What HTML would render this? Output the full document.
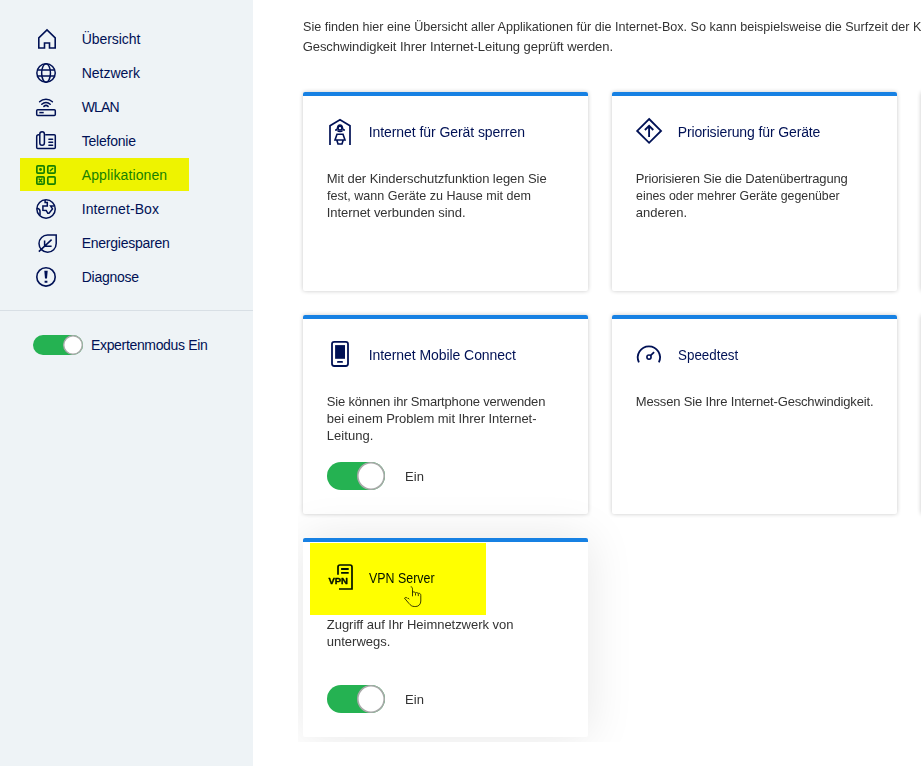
<!DOCTYPE html>
<html lang="de">
<head>
<meta charset="utf-8">
<title>Internet-Box – Applikationen</title>
<style>
html,body{margin:0;padding:0;}
body{width:921px;height:766px;overflow:hidden;position:relative;background:#fff;font-family:"Liberation Sans",Arial,sans-serif;color:#333;}
.t{position:absolute;white-space:pre;line-height:20px;margin:0;font-weight:400;}
#txt{position:absolute;left:0;top:0;width:921px;height:766px;overflow:hidden;will-change:transform;}
.abs{position:absolute;}
#side{position:absolute;left:0;top:0;width:253px;height:766px;background:#eef3f6;}
#sep{position:absolute;left:0;top:310px;width:253px;height:1px;background:#d8dfe5;}
.hl{position:absolute;background:#ffff00;}
.card{position:absolute;width:285px;height:199px;background:#fff;border-radius:2px;box-shadow:0 0 4px rgba(0,0,0,.22);}
.card:before{content:"";position:absolute;left:0;top:0;right:0;height:4px;background:#1781e3;border-radius:2px 2px 0 0;}
.card.hover{box-shadow:0 0 48px rgba(0,0,0,.10);}
#clip{position:absolute;left:298px;top:0;width:623px;height:742px;overflow:hidden;}
svg{position:absolute;overflow:visible;}
</style>
</head>
<body>

<div id="clip">
<div class="card" style="left:5px;top:92px"></div>
<div class="card" style="left:314px;top:92px"></div>
<div class="card" style="left:623px;top:92px"></div>
<div class="card" style="left:5px;top:315px"></div>
<div class="card" style="left:314px;top:315px"></div>
<div class="card" style="left:623px;top:315px"></div>
<div class="card hover" style="left:5px;top:538px"></div>
</div>
<div id="side"></div><div id="sep"></div>
<div class="hl" style="left:20px;top:158px;width:169px;height:33px;background:#eef300"></div>
<div class="hl" style="left:310px;top:543px;width:176px;height:72px;background:#ffff00"></div>
<div class="t" style="left:81.70px;top:29.15px;font-size:14px;color:#001155;letter-spacing:-0.05px;">Übersicht</div>
<div class="t" style="left:81.70px;top:63.15px;font-size:14px;color:#001155;">Netzwerk</div>
<div class="t" style="left:81.70px;top:97.15px;font-size:14px;color:#001155;letter-spacing:-0.833px;">WLAN</div>
<div class="t" style="left:81.70px;top:131.15px;font-size:14px;color:#001155;letter-spacing:-0.225px;">Telefonie</div>
<div class="t" style="left:81.70px;top:165.15px;font-size:14px;color:#178100;letter-spacing:0.117px;">Applikationen</div>
<div class="t" style="left:81.70px;top:199.15px;font-size:14px;color:#001155;letter-spacing:0.091px;">Internet-Box</div>
<div class="t" style="left:81.70px;top:233.15px;font-size:14px;color:#001155;letter-spacing:-0.25px;">Energiesparen</div>
<div class="t" style="left:81.70px;top:267.15px;font-size:14px;color:#001155;letter-spacing:-0.257px;">Diagnose</div>
<div class="t" style="left:91.00px;top:335.15px;font-size:14px;color:#001155;letter-spacing:-0.338px;">Expertenmodus Ein</div>
<div id="txt">
<div class="t" style="left:302.70px;top:16.50px;font-size:13px;color:#333333;transform:scaleX(0.9681);transform-origin:0.8px 50%;">Sie finden hier eine Übersicht aller Applikationen für die Internet-Box. So kann beispielsweise die Surfzeit der Kinder</div>
<div class="t" style="left:302.70px;top:36.50px;font-size:13px;color:#333333;letter-spacing:-0.062px;">Geschwindigkeit Ihrer Internet-Leitung geprüft werden.</div>
<h3 class="t" style="left:368.70px;top:122.15px;font-size:14px;color:#001155;letter-spacing:-0.068px;">Internet für Gerät sperren</h3>
<div class="t" style="left:326.80px;top:168.50px;font-size:13px;color:#333333;letter-spacing:-0.054px;">Mit der Kinderschutzfunktion legen Sie</div>
<div class="t" style="left:326.80px;top:185.50px;font-size:13px;color:#333333;transform:scaleX(0.9667);transform-origin:0.8px 50%;">fest, wann Geräte zu Hause mit dem</div>
<div class="t" style="left:326.80px;top:202.50px;font-size:13px;color:#333333;letter-spacing:-0.065px;">Internet verbunden sind.</div>
<h3 class="t" style="left:677.70px;top:122.15px;font-size:14px;color:#001155;letter-spacing:-0.122px;">Priorisierung für Geräte</h3>
<div class="t" style="left:635.80px;top:168.50px;font-size:13px;color:#333333;letter-spacing:-0.153px;">Priorisieren Sie die Datenübertragung</div>
<div class="t" style="left:635.80px;top:185.50px;font-size:13px;color:#333333;transform:scaleX(0.9488);transform-origin:0.8px 50%;">eines oder mehrer Geräte gegenüber</div>
<div class="t" style="left:635.80px;top:202.50px;font-size:13px;color:#333333;">anderen.</div>
<h3 class="t" style="left:368.70px;top:345.15px;font-size:14px;color:#001155;letter-spacing:-0.068px;">Internet Mobile Connect</h3>
<div class="t" style="left:326.80px;top:391.50px;font-size:13px;color:#333333;letter-spacing:-0.182px;">Sie können ihr Smartphone verwenden</div>
<div class="t" style="left:326.80px;top:408.50px;font-size:13px;color:#333333;letter-spacing:-0.056px;">bei einem Problem mit Ihrer Internet-</div>
<div class="t" style="left:326.80px;top:425.50px;font-size:13px;color:#333333;letter-spacing:0.043px;">Leitung.</div>
<div class="t" style="left:405.00px;top:466.50px;font-size:13px;color:#333333;letter-spacing:0.1px;">Ein</div>
<h3 class="t" style="left:677.70px;top:345.15px;font-size:14px;color:#001155;transform:scaleX(0.9548);transform-origin:0.8px 50%;">Speedtest</h3>
<div class="t" style="left:635.80px;top:391.50px;font-size:13px;color:#333333;letter-spacing:-0.163px;">Messen Sie Ihre Internet-Geschwindigkeit.</div>
<h3 class="t" style="left:368.70px;top:568.15px;font-size:14px;color:#001100;transform:scaleX(0.8851);transform-origin:0.8px 50%;">VPN Server</h3>
<div class="t" style="left:326.80px;top:614.50px;font-size:13px;color:#333333;letter-spacing:-0.032px;">Zugriff auf Ihr Heimnetzwerk von</div>
<div class="t" style="left:326.80px;top:631.50px;font-size:13px;color:#333333;">unterwegs.</div>
<div class="t" style="left:405.00px;top:689.50px;font-size:13px;color:#333333;letter-spacing:0.1px;">Ein</div>
</div>
<svg class="tg" width="50" height="20" viewBox="0 0 50 20" style="left:33px;top:335px"><rect width="50" height="20" rx="10.0" fill="#25b252"/><circle cx="40.0" cy="10.0" r="9.3" fill="#fff" stroke="#a9a9a9" stroke-width="1.4"/></svg>
<svg class="tg" width="58" height="28" viewBox="0 0 58 28" style="left:327px;top:462px"><rect width="58" height="28" rx="14.0" fill="#25b252"/><circle cx="44.0" cy="14.0" r="13.2" fill="#fff" stroke="#a9a9a9" stroke-width="1.6"/></svg>
<svg class="tg" width="58" height="28" viewBox="0 0 58 28" style="left:327px;top:685px"><rect width="58" height="28" rx="14.0" fill="#25b252"/><circle cx="44.0" cy="14.0" r="13.2" fill="#fff" stroke="#a9a9a9" stroke-width="1.6"/></svg>
<svg width="921" height="766" viewBox="0 0 921 766" style="left:0;top:0" fill="none" stroke="#001155" stroke-width="1.6" stroke-linejoin="miter" stroke-linecap="butt">
<!-- home -->
<path d="M44.5 48.8V43h5v5.8M44.5 48h-5.7V37.9L47 29.9l8.2 8V48h-5.7" />
<!-- globe -->
<g stroke-width="1.5"><circle cx="46.05" cy="73.05" r="9.2"/><ellipse cx="46.05" cy="73.05" rx="4.4" ry="9.2"/><path d="M37.200 69.950h17.700M37.200 76.100h17.700"/></g>
<!-- wlan -->
<g stroke-width="1.5"><rect x="36.7" y="109.7" width="18.6" height="5.8" rx="1"/><path d="M39.3 112.6h4.4" /><path d="M39.6 101.8a9 9 0 0 1 12.8 0M41.8 104.2a6 6 0 0 1 8.4 0M43.9 106.4a3 3 0 0 1 4.2 0" stroke-linecap="round"/></g>
<!-- phone -->
<g stroke-width="1.5"><path d="M45.2 134.8h9.1a1 1 0 0 1 1 1v11.6a1 1 0 0 1-1 1H37.7a1 1 0 0 1-1-1V136.8a2 2 0 0 1 2-2h.5"/><rect x="39.8" y="131.7" width="4.6" height="13.6" rx="2.3"/><path d="M48.900 139.300h3.700M48.900 142.300h3.700M48.900 145.300h3.700" stroke-linecap="round"/></g>
<!-- apps -->
<g stroke="#178100" stroke-width="1.700"><rect x="36.850" y="165.800" width="7.300" height="7.300" rx="0.900"/><rect x="47.800" y="165.800" width="7.300" height="7.300" rx="0.900"/><rect x="36.850" y="176.800" width="7.300" height="7.300" rx="0.900"/><rect x="47.800" y="176.800" width="7.300" height="7.300" rx="0.900"/><circle cx="40.500" cy="169.500" r="1.450" fill="#178100" stroke="none"/><path d="M50.300 170.700L52.700 168.400M39.100 179l2.800 2.900M41.900 179l-2.800 2.900" stroke-width="1.400" stroke-linecap="round"/></g>
<!-- internet-box -->
<g stroke-width="1.5"><circle cx="46.05" cy="209.05" r="9.2"/><path d="M45.1 200v2.600h2.200v3.300h-4.400v4.300l3.300.300l1.600 2.800h1.200l3.500-4.400l-1.900-3h3.500M36.900 208.200c1.500.200 3.100 1.200 3.100 2.800v4.300"/></g>
<!-- leaf -->
<g stroke-width="1.5"><path d="M56.2 235h-8.5a8.6 8.6 0 1 0 8.5 8.6z"/><path d="M38.8 251.6L51.6 239.6M44.6 240.4v5.9h7"/></g>
<!-- diagnose -->
<g><circle cx="46" cy="276.9" r="9.2"/><path d="M44.3 270.8h3.4l-.7 7.6h-2zM44.6 280.8h2.8v2h-2.8z" fill="#001155" stroke="none"/></g>

<!-- card1 house child -->
<g stroke-width="1.7"><path d="M330 144.900V125.700L340 119.800l10 5.900v19.200"/><circle cx="340" cy="128.200" r="1.900" stroke-width="1.500"/><path d="M335 130h1.300c1-.600 1.100-1.700 1.300-2.700c.300-1.700 1.100-2.400 2.400-2.400s2.100.700 2.400 2.400c.200 1 .300 2.100 1.300 2.700h1.300M337.400 130.400a3.400 3.400 0 0 0 5.200 0" stroke-width="1.500"/><path d="M337 134.200h6l2 5.800H335zM336.800 140l1.200 4h4l1.200-4" stroke-width="1.600"/></g>
<!-- card2 diamond -->
<g stroke-width="1.850"><path d="M649.100 119l11.900 11.900l-11.900 11.900l-11.900-11.900z"/><path d="M649.100 137V125.600M644.900 130l4.200-4.200l4.200 4.200"/></g>
<!-- card3 phone -->
<g stroke-width="1.800"><rect x="332" y="341.900" width="16" height="24.100" rx="2.200"/><rect x="335.100" y="345.100" width="9.900" height="13.700" fill="#001155" stroke="none"/><path d="M337.900 361.900h4.200" stroke-linecap="round"/></g>
<!-- card4 speed -->
<g stroke-width="1.800"><path d="M638.900 362.300a11.100 11.100 0 1 1 20 0"/><circle cx="649" cy="357.100" r="2.100" stroke-width="1.600"/><path d="M650.500 355.600l3.600-3.400"/></g>
<!-- card5 vpn -->
<g stroke="#001100" stroke-width="1.700"><path d="M338 574.750V567a2 2 0 0 1 2-2h10a2 2 0 0 1 2 2v22H339"/><path d="M341.100 569h7.600M341.100 572.900h7.600" stroke-width="1.800"/></g>
<text x="328.400" y="584.400" font-family="Liberation Sans, Arial, sans-serif" font-weight="700" font-size="9.400" textLength="19.600" lengthAdjust="spacingAndGlyphs" fill="#001100" stroke="#001100" stroke-width="0.400" stroke-linejoin="round">VPN</text>
<!-- cursor -->
<path d="M410.700 586.800c1.500 0 1.800 1 1.800 2.500v7M412.500 592c1.500-.3 2.800 0 3 1.500v2M415.500 592.600c1.600-.2 2.700.3 2.800 1.500v2M418.300 593.200c1.600 0 2.500.6 2.500 2.200v5.600c0 3-2 5.500-5 5.500h-1.500c-2.500 0-3.800-1.300-5.300-3l-4.500-5.300c.8-1 2-.8 3 0M408 598l1.300 1.200" stroke="#000" stroke-width="0.900" opacity="0.850"/>
</svg>

</body></html>
